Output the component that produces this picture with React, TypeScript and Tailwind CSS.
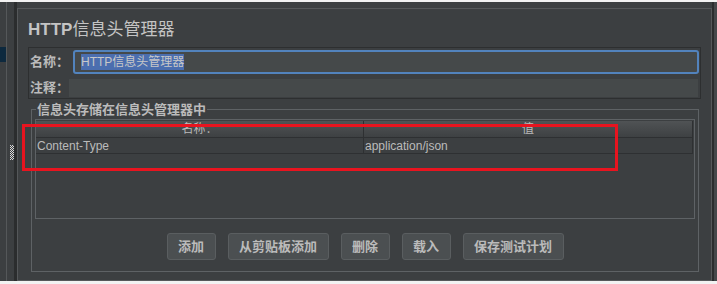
const cjk = { fontFamily: '"Liberation Sans", "Noto Sans CJK SC", sans-serif' };

function Grip() {
  const dots = [];
  for (let r = 0; r < 15; r++) {
    for (let c = 0; c < 4; c++) {
      if ((r + c) % 2 === 0) dots.push(<rect key={r + "-" + c} x={c} y={r} width="1" height="1" fill="#d8d8d8" />);
    }
  }
  return (
    <svg width="4" height="15" viewBox="0 0 4 15">
      {dots}
    </svg>
  );
}

function Btn({ label, w }: { label: string; w: string }) {
  return (
    <div
      className={`${w} h-[27px] flex items-center justify-center rounded-[3px] border border-[#5a5e60] bg-[#4b4f51] text-[13px] font-bold text-[#bbbbbb]`}
    >
      {label}
    </div>
  );
}

export default function App() {
  return (
    <div className="relative w-[717px] h-[284px] bg-[#f2f2f2] pt-[2px] pb-[3px] flex flex-col" style={cjk}>
      <div className="flex flex-1 bg-[#3c3f41]">
        {/* left tree strip */}
        <div className="w-[6px] flex flex-col">
          <div className="mt-[45px] h-[15px] bg-[#0d293e]" />
        </div>
        <div className="w-[1px] bg-[#55585a]" />
        <div className="w-[7px] flex flex-col items-center">
          <div className="mt-[143px] ml-[2px]">
            <Grip />
          </div>
        </div>
        <div className="w-[3px] bg-[#2b2d2e]" />

        {/* main panel */}
        <div className="flex flex-col pt-[6px] w-[695px]">
          <div className="flex-1 flex flex-col border border-[#55585a] bg-[#3c3f41]">
            <div className="h-[38px] pl-[10px] pt-[4px] flex items-center text-[17px] text-[#c4c4c4]">
              <span className="font-bold">HTTP</span>信息头管理器
            </div>

            {/* name / comment */}
            <div className="ml-[10px] mr-[10px] h-[52px] border border-[#2d2f30] flex flex-col">
              <div className="mt-[2px] h-[24px] flex">
                <div className="w-[44px] pl-[1px] flex items-center text-[13px] font-bold text-[#bbbbbb]">名称：</div>
                <div className="flex-1 mr-[1px] rounded-[3px] border-2 border-[#5283bd] bg-[#45494a] flex items-center pl-[6px]">
                  <span className="bg-[#4b6eaf] text-[12px] leading-[16px] text-[#c8c8c8]">HTTP信息头管理器</span>
                </div>
              </div>
              <div className="mt-[5px] h-[18px] flex">
                <div className="w-[40px] pl-[1px] flex items-center text-[13px] font-bold text-[#bbbbbb]">注释：</div>
                <div className="flex-1 mr-[2px] bg-[#45494a]" />
              </div>
            </div>

            {/* header store group */}
            <div className="relative mt-[10px] ml-[13px] mr-[12px] h-[163px] border border-[#5e6265] flex flex-col px-[3px] pt-[9px] pb-[11px]">
              <div className="absolute left-[4px] top-[-8px] px-[1px] bg-[#3c3f41] text-[13px] leading-[15px] font-bold text-[#bbbbbb]">
                信息头存储在信息头管理器中
              </div>
              <div className="flex-1 border border-[#5e6265] pt-[1px] pr-[1px]">
                <div className="h-[17px] flex bg-gradient-to-b from-[#505355] to-[#3e4143] border-b border-r border-[#2e3032] text-[12px] text-[#bbbbbb]">
                  <div className="w-[328px] flex items-center justify-center border-r border-[#2e3032]">名称：</div>
                  <div className="flex-1 flex items-center justify-center">值</div>
                </div>
                <div className="h-[16px] flex border-b border-r border-[#2e3032] text-[12px] text-[#bbbbbb]">
                  <div className="w-[328px] pl-[1px] flex items-center border-r border-[#2e3032]">Content-Type</div>
                  <div className="flex-1 pl-[1px] flex items-center">application/json</div>
                </div>
              </div>
              <div className="mt-[14px] flex justify-center gap-[12px]">
                <Btn label="添加" w="w-[49px]" />
                <Btn label="从剪贴板添加" w="w-[101px]" />
                <Btn label="删除" w="w-[49px]" />
                <Btn label="载入" w="w-[49px]" />
                <Btn label="保存测试计划" w="w-[101px]" />
              </div>
            </div>
          </div>
        </div>

        {/* right edge */}
        <div className="w-[2px] bg-[#2b2d2e]" />
        <div className="flex-1 bg-[#45484a]" />
      </div>

      {/* red annotation */}
      <div className="absolute left-[22px] top-[124px] w-[596px] h-[47px] border-[3px] border-[#e8141f]" />
    </div>
  );
}
